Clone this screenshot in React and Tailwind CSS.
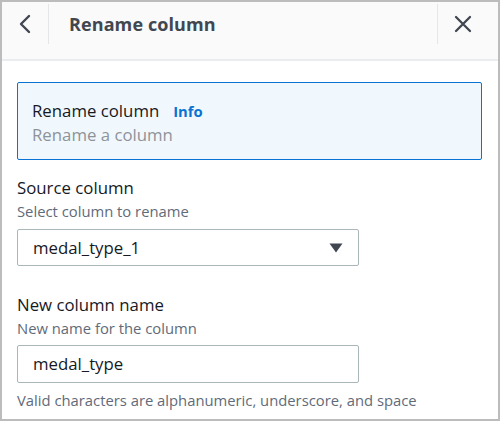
import React from "react";

export default function App() {
  return (
    <div
      className="w-[500px] h-[421px] bg-white border-2 border-[#bcbcbc] overflow-hidden flex flex-col"
      style={{ fontFamily: '"Open Sans", "Noto Sans", sans-serif' }}
    >
      <div className="h-[59px] bg-[#fafafa] border-b-2 border-[#eaeded] flex items-start shrink-0">
        <div className="w-[47px] h-[40px] mt-[2px] flex items-center justify-center border-r border-[#e4e6e8]">
          <svg width="14" height="20" viewBox="0 0 14 20" fill="none">
            <path d="M11 2 L3 10 L11 18" stroke="#414750" strokeWidth="2.4" strokeLinecap="round" strokeLinejoin="round" />
          </svg>
        </div>
        <div className="flex-1 h-[44px] flex items-center pl-[20px] text-[18px] font-bold text-[#414750] tracking-[0.1px]">
          Rename column
        </div>
        <div className="w-[61px] h-[40px] mt-[2px] flex items-center pl-[16px] border-l border-[#e4e6e8]">
          <svg width="18" height="18" viewBox="0 0 18 18" fill="none">
            <path d="M2 2 L16 16 M16 2 L2 16" stroke="#414750" strokeWidth="2.3" strokeLinecap="round" />
          </svg>
        </div>
      </div>
      <div className="flex-1 px-[15px] pt-[21px]">
        <div className="mr-[1px] h-[78px] border border-[#0972d3] rounded-[2px] bg-[#f1f8fd] pl-[14px] pt-[16px]">
          <div className="flex items-center gap-[14px] h-[24px]">
            <span className="text-[16.8px] text-[#16191f]">Rename column</span>
            <span className="text-[14.8px] font-bold text-[#0972d3]">Info</span>
          </div>
          <div className="text-[16.8px] text-[#8d9399] h-[24px] leading-[24px]">Rename a column</div>
        </div>
        <div className="mt-[16px] text-[16.8px] text-[#16191f] leading-[24px]">Source column</div>
        <div className="text-[14.8px] text-[#5f6b7a] leading-[22px]">Select column to rename</div>
        <div className="mt-[7px] w-[342px] h-[37px] border border-[#aab7b8] rounded-[2px] flex items-center justify-between pl-[15px] pr-[15px]">
          <span className="text-[16.8px] text-[#16191f]">medal_type_1</span>
          <svg width="14" height="10" viewBox="0 0 14 10">
            <path d="M0.5 0.5 H13.5 L7 9.5 Z" fill="#414750" />
          </svg>
        </div>
        <div className="mt-[27px] text-[16.8px] text-[#16191f] leading-[24px]">New column name</div>
        <div className="text-[14.8px] text-[#5f6b7a] leading-[22px]">New name for the column</div>
        <div className="mt-[6px] w-[342px] h-[38px] border border-[#aab7b8] rounded-[2px] flex items-center pl-[15px]">
          <span className="text-[16.8px] text-[#16191f]">medal_type</span>
        </div>
        <div className="mt-[6px] text-[14.8px] text-[#5f6b7a] leading-[22px]">
          Valid characters are alphanumeric, underscore, and space
        </div>
      </div>
    </div>
  );
}
